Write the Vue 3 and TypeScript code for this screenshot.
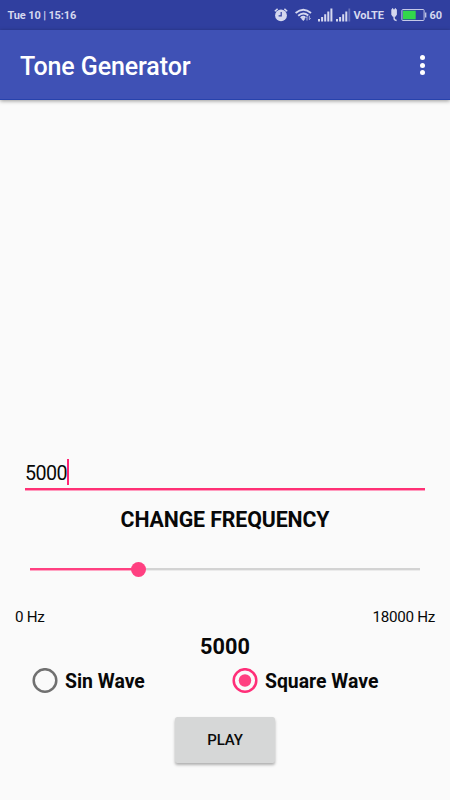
<script setup lang="ts">
import { computed, ref } from 'vue'

type Wave = 'sin' | 'square'

const maxFrequency = 18000
const frequency = ref(5000)
const wave = ref<Wave>('square')
const waves: { id: Wave; label: string }[] = [
  { id: 'sin', label: 'Sin Wave' },
  { id: 'square', label: 'Square Wave' },
]
const progress = computed(() => `${(frequency.value / maxFrequency) * 100}%`)
</script>

<template>
  <div class="screen">
    <header class="status">
      <span class="clock">Tue 10 | 15:16</span>
      <svg class="alarm" width="14" height="14" viewBox="0 0 14 14">
        <circle cx="7" cy="7.400" r="5.900" fill="#d5d8ef" />
        <path d="M.8 3.300 3.600.9M13.200 3.300 10.400.9" stroke="#d5d8ef" stroke-width="1.500" />
        <path d="M7.200 4v3.800H4.600" fill="none" stroke="#303f9f" stroke-width="1.200" />
      </svg>
      <svg class="wifi" width="17" height="14" viewBox="0 0 17 14">
        <g fill="none" stroke="#d5d8ef" stroke-width="1.900">
          <path d="M.6 5Q8.300-1.600 16 5" />
          <path d="M3.200 7.700Q8.300 3.300 13.300 7.500" />
          <path d="M5.700 10Q8.300 7.800 10.300 9.700" />
        </g>
        <path d="M6.200 10.800 8.300 9.600 10.300 10.800 8.300 13z" fill="#d5d8ef" />
        <path d="M12 12.500V8.600l-1.300 1.500M14.300 7.800v3.900l1.400-1.500" fill="none" stroke="#aeb5df" stroke-width="1" />
      </svg>
      <svg class="signal" width="15" height="14" viewBox="0 0 15 14">
        <path d="M0 11h2v2.500H0zM3.100 9h2v4.500h-2zM6.200 6.300h2v7.200h-2zM9.300 3.500h2v10h-2zM12.400.5h2v13h-2z" fill="#d5d8ef" />
      </svg>
      <svg class="signal second" width="15" height="14" viewBox="0 0 15 14">
        <path d="M0 11h2v2.500H0zM3.100 9h2v4.500h-2zM6.200 6.300h2v7.200h-2zM9.300 3.500h2v10h-2z" fill="#d5d8ef" />
        <path d="M12.400.5h1.800v13h-1.800z" fill="#6671ba" />
      </svg>
      <span class="volte">VoLTE</span>
      <svg class="plug" width="7" height="14" viewBox="0 0 7 14">
        <path d="M1 .3h1.200v1h1.600v-1H5v1h.9v5.500L4.400 8.800H1.800L.3 6.800V1.300H1z" fill="#d5d8ef" />
        <path d="M3.100 8v2.300Q3.100 12.300 5.600 12.500" fill="none" stroke="#d5d8ef" stroke-width="1.400" />
      </svg>
      <svg class="battery" width="26" height="14" viewBox="0 0 26 14">
        <rect x=".9" y="1.500" width="22.200" height="11" rx="1" fill="none" stroke="#c5c9e8" />
        <rect x="2" y="2.700" width="12.700" height="8.600" fill="#32d74b" />
        <path d="M24.700 4.500v5" stroke="#c5c9e8" stroke-width="1.300" />
      </svg>
      <span class="level">60</span>
    </header>

    <div class="toolbar">
      <h1>Tone Generator</h1>
      <button class="menu" aria-label="More options"><i /><i /><i /></button>
    </div>

    <main>
      <div class="field"><span>5000</span><b class="caret" /></div>
      <h2>CHANGE FREQUENCY</h2>
      <div class="slider">
        <div class="track"><div class="fill" :style="{ width: progress }"><i class="thumb" /></div></div>
      </div>
      <div class="range"><span>0 Hz</span><span>{{ maxFrequency }} Hz</span></div>
      <div class="value">{{ frequency }}</div>
      <div class="waves" role="radiogroup">
        <div
          v-for="w in waves"
          :key="w.id"
          class="wave"
          :class="{ on: wave === w.id }"
          role="radio"
          :aria-checked="wave === w.id"
          @click="wave = w.id"
        >
          <svg class="ring" width="26" height="26" viewBox="0 0 26 26">
            <circle class="outline" cx="13" cy="12.500" r="11.300" />
            <circle v-if="wave === w.id" class="dot" cx="13" cy="12.500" r="6.250" />
          </svg>
          <span>{{ w.label }}</span>
        </div>
      </div>
      <button class="play">PLAY</button>
    </main>
  </div>
</template>

<style>
body {
  background: #fafafa;
}
</style>

<style scoped>
* {
  box-sizing: border-box;
}
.screen {
  width: 450px;
  height: 800px;
  overflow: hidden;
  display: flex;
  flex-direction: column;
  background: #fafafa;
  color: #080808;
  font-family: Roboto, sans-serif;
}
.status {
  height: 30px;
  flex: none;
  display: flex;
  align-items: center;
  padding: 0 7.500px;
  background: #303f9f;
  color: #d5d8ef;
  font-size: 11px;
  font-weight: 700;
  white-space: nowrap;
}
.status > * {
  flex: none;
}
.clock {
  width: 266px;
  letter-spacing: -0.130px;
}
.alarm {
  margin-right: 7.500px;
}
.wifi {
  margin-right: 5.500px;
}
.signal {
  margin-right: 3.500px;
}
.signal.second {
  margin-right: 2.500px;
}
.volte {
  width: 37px;
  letter-spacing: -0.100px;
}
.plug {
  margin-right: 3px;
}
.battery {
  margin-right: 3px;
}
.toolbar {
  height: 70px;
  flex: none;
  display: flex;
  align-items: center;
  justify-content: space-between;
  padding: 2px 20px 0;
  background: #3f51b5;
  border-bottom: 1px solid #2742ac;
  box-shadow: 0 1px 4px rgba(0, 0, 0, 0.4);
  color: #fff;
}
h1 {
  margin: 2px 0 0;
  font-size: 25px;
  font-weight: 500;
  letter-spacing: -0.100px;
}
.menu {
  display: flex;
  flex-direction: column;
  gap: 2.500px;
  padding: 0 5px;
  margin-top: -1px;
  border: 0;
  background: none;
}
.menu i {
  width: 5px;
  height: 5px;
  border-radius: 50%;
  background: #fff;
}
main {
  flex: 1;
  display: flex;
  flex-direction: column;
  padding-top: 355px;
}
.field {
  height: 35px;
  margin: 0 25px;
  display: flex;
  align-items: center;
  border-bottom: 2px solid #ff3075;
  box-shadow: 0 1px #ff9dbf;
  font-size: 19.700px;
  letter-spacing: -0.600px;
}
.field span {
  padding-top: 4px;
}
.caret {
  width: 2px;
  height: 26px;
  margin-top: 0;
  background: #ff2475;
}
h2 {
  height: 30px;
  margin: 15px 0 0;
  line-height: 30px;
  font-size: 21.300px;
  font-weight: 700;
  letter-spacing: -0.100px;
  text-align: center;
}
.slider {
  height: 20px;
  margin: 24px 30px 0;
  display: flex;
  align-items: center;
}
.track {
  flex: 1;
  height: 2px;
  background: #d3d3d3;
  box-shadow: 0 1px #ebebeb;
}
.fill {
  height: 2px;
  display: flex;
  align-items: center;
  justify-content: flex-end;
  background: #ff4081;
  box-shadow: 0 1px #ffa6c4;
}
.thumb {
  flex: none;
  width: 15px;
  height: 15px;
  margin-right: -7.500px;
  border-radius: 50%;
  background: #ff4081;
}
.range {
  height: 20px;
  margin: 28px 15px 0;
  display: flex;
  justify-content: space-between;
  line-height: 20px;
  font-size: 15.200px;
  letter-spacing: -0.300px;
}
.value {
  height: 28px;
  margin-top: 6px;
  line-height: 28px;
  font-size: 21.700px;
  font-weight: 700;
  text-align: center;
}
.waves {
  height: 39px;
  padding-left: 32px;
  display: grid;
  grid-template-columns: 200px 200px;
}
.wave {
  display: flex;
  align-items: center;
  gap: 7px;
  font-size: 19.400px;
  font-weight: 700;
}
.wave span {
  padding-top: 2px;
}
.outline {
  fill: none;
  stroke: #707070;
  stroke-width: 2.500px;
}
.on .outline {
  stroke: #ff2e78;
}
.dot {
  fill: #ff4081;
}
.play {
  width: 100px;
  height: 46px;
  margin: 17px auto 0;
  padding: 0;
  border: 0;
  border-radius: 2.500px;
  background: #d6d7d7;
  box-shadow: 0 2px 3px rgba(0, 0, 0, 0.3);
  color: #0b0b0b;
  font: 500 15px Roboto, sans-serif;
  letter-spacing: -0.150px;
}
</style>
